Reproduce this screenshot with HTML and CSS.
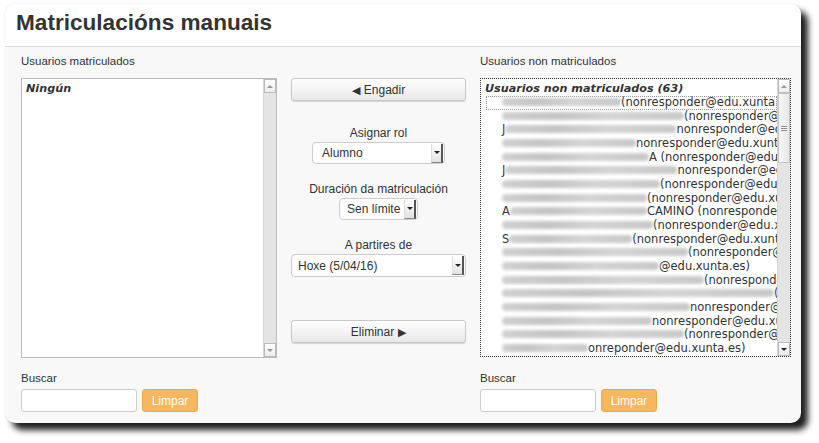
FILE: index.html
```html
<!DOCTYPE html>
<html lang="gl">
<head>
    <meta charset="UTF-8">
    <title>Matriculacións manuais</title>
    <link rel="stylesheet" href="styles.css">
</head>
<body>
    <div class="window">
        <h1 class="title">Matriculacións manuais</h1>

        <div class="panel">
            <div class="caption cap-left">Usuarios matriculados</div>
            <div class="caption cap-right">Usuarios non matriculados</div>

            <!-- enrolled users -->
            <div class="listbox box-left">
                <div class="list-body">
                    <div class="optgroup">Ningún</div>
                </div>
                <div class="scrollbar">
                    <div class="sb-btn"><span class="tri-up disabled"></span></div>
                    <div class="sb-track"></div>
                    <div class="sb-btn"><span class="tri-down disabled"></span></div>
                </div>
            </div>

            <!-- actions -->
            <div class="actions">
                <button class="btn"><span class="arrow-l">&#9664;</span>Engadir</button>

                <div class="field field-role">
                    <div class="field-label">Asignar rol</div>
                    <div class="select select-role">
                        <span class="select-text">Alumno</span>
                        <span class="select-arrow"><span class="tri-down"></span></span>
                    </div>
                </div>

                <div class="field">
                    <div class="field-label">Duración da matriculación</div>
                    <div class="select select-duration">
                        <span class="select-text">Sen límite</span>
                        <span class="select-arrow"><span class="tri-down"></span></span>
                    </div>
                </div>

                <div class="field">
                    <div class="field-label">A partires de</div>
                    <div class="select select-start">
                        <span class="select-text">Hoxe (5/04/16)</span>
                        <span class="select-arrow"><span class="tri-down"></span></span>
                    </div>
                </div>

                <button class="btn btn-remove">Eliminar<span class="arrow-r">&#9654;</span></button>
            </div>

            <!-- potential users -->
            <div class="listbox box-right focused">
                <div class="list-body">
                    <div class="optgroup">Usuarios non matriculados (63)</div>
                    <div class="opt selected"><span class="blur" style="width:119px"></span>(nonresponder@edu.xunta.es)</div>
                    <div class="opt"><span class="blur" style="width:182px"></span>(nonresponder@edu.xunta.es)</div>
                    <div class="opt">J<span class="blur" style="width:171px"></span>nonresponder@edu.xunta.es)</div>
                    <div class="opt"><span class="blur" style="width:134px"></span>nonresponder@edu.xunta.es)</div>
                    <div class="opt"><span class="blur" style="width:147px"></span>A (nonresponder@edu.xunta.es)</div>
                    <div class="opt">J<span class="blur" style="width:172px"></span>nonresponder@edu.xunta.es)</div>
                    <div class="opt"><span class="blur" style="width:158px"></span>(nonresponder@edu.xunta.es)</div>
                    <div class="opt"><span class="blur" style="width:145px"></span>(nonresponder@edu.xunta.es)</div>
                    <div class="opt">A<span class="blur" style="width:137px"></span>CAMINO (nonresponder@edu.xunta.es)</div>
                    <div class="opt"><span class="blur" style="width:151px"></span>(nonresponder@edu.xunta.es)</div>
                    <div class="opt">S<span class="blur" style="width:123px"></span>(nonresponder@edu.xunta.es)</div>
                    <div class="opt"><span class="blur" style="width:186px"></span>(nonresponder@edu.xunta.es)</div>
                    <div class="opt"><span class="blur" style="width:157px"></span>@edu.xunta.es)</div>
                    <div class="opt"><span class="blur" style="width:202px"></span>(nonresponder@edu.xunta.es)</div>
                    <div class="opt"><span class="blur" style="width:272px"></span>(nonresponder@edu.xunta.es)</div>
                    <div class="opt"><span class="blur" style="width:188px"></span>nonresponder@edu.xunta.es)</div>
                    <div class="opt"><span class="blur" style="width:150px"></span>nonresponder@edu.xunta.es)</div>
                    <div class="opt"><span class="blur" style="width:182px"></span>(nonresponder@edu.xunta.es)</div>
                    <div class="opt"><span class="blur" style="width:86px"></span>onreponder@edu.xunta.es)</div>
                </div>
                <div class="scrollbar">
                    <div class="sb-btn"><span class="tri-up disabled"></span></div>
                    <div class="sb-track">
                        <div class="sb-thumb"><span class="grip"></span></div>
                    </div>
                    <div class="sb-btn"><span class="tri-down"></span></div>
                </div>
            </div>

            <div class="search search-left">
                <div class="caption">Buscar</div>
                <div class="search-row">
                    <input class="search-input" type="text">
                    <button class="btn-clear">Limpar</button>
                </div>
            </div>

            <div class="search search-right">
                <div class="caption">Buscar</div>
                <div class="search-row">
                    <input class="search-input" type="text">
                    <button class="btn-clear">Limpar</button>
                </div>
            </div>
        </div>
    </div>
</body>
</html>
```

FILE: styles.css
```css
body {
    margin: 0;
    padding-bottom: 20px;
    background: #fff;
    font-family: 'Liberation Sans', Arial, sans-serif;
    color: #333;
}
.window {
    margin: 4px 0 0 5px;
    width: 796px;
    height: 419px;
    border-radius: 10px;
    background: #f8f8f8;
    box-shadow: 7px 7px 6px rgba(0, 0, 0, 0.88), 0 0 2px rgba(0, 0, 0, 0.12);
    overflow: hidden;
}
.title {
    margin: 0;
    height: 42px;
    padding-left: 11px;
    background: #fff;
    border-bottom: 1px solid #ddd;
    font-size: 22.6px;
    font-weight: bold;
    line-height: 37px;
    color: #333;
}
.panel {
    display: grid;
    grid-template-columns: 256px 175px 311px;
    grid-template-rows: auto 280px auto;
    column-gap: 14px;
    padding: 6px 0 0 16px;
}
.caption {
    font-size: 11.5px;
    line-height: 16px;
    color: #333;
}
.cap-left { grid-column: 1; grid-row: 1; margin-bottom: 9px; }
.cap-right { grid-column: 3; grid-row: 1; margin-bottom: 9px; }
.box-left { grid-column: 1; grid-row: 2; }
.box-right { grid-column: 3; grid-row: 2; height: 279px; }
.actions { grid-column: 2; grid-row: 2; }
.search-left { grid-column: 1; grid-row: 3; }
.search-right { grid-column: 3; grid-row: 3; }

/* list boxes */
.listbox {
    display: flex;
    box-sizing: border-box;
    background: #fff;
    border: 1px solid #bbb;
}
.listbox.focused {
    border: 1px dotted #333;
}
.list-body {
    flex: 1;
    min-width: 0;
    overflow: hidden;
    padding-top: 3px;
    font-family: 'DejaVu Sans', sans-serif;
    font-size: 11.2px;
    color: #333;
}
.optgroup {
    padding-left: 4px;
    font-weight: bold;
    font-style: italic;
    line-height: 14px;
}
.opt {
    padding-left: 21px;
    font-size: 11.5px;
    line-height: 13.67px;
    white-space: nowrap;
    color: #333;
}
.opt.selected {
    margin-left: 5px;
    padding-left: 16px;
    outline: 1px dotted #999;
    outline-offset: -1px;
}
.blur {
    display: inline-block;
    height: 8px;
    vertical-align: 0;
    background: linear-gradient(90deg, #d0d0d0, #c4c4c4 30%, #d4d4d4 60%, #c8c8c8);
    border-radius: 4px;
    filter: blur(1.6px);
}

/* scrollbars */
.scrollbar {
    width: 12px;
    display: flex;
    flex-direction: column;
    background: #e4e4e4;
    border-left: 1px solid #d4d4d4;
}
.sb-btn {
    height: 12px;
    display: flex;
    align-items: center;
    justify-content: center;
    background: linear-gradient(#fff, #ececec);
    border: 1px solid #bbb;
}
.sb-track {
    flex: 1;
}
.sb-thumb {
    height: 68px;
    background: linear-gradient(90deg, #f6f6f6, #e8e8e8);
    border: 1px solid #c4c4c4;
    display: flex;
    align-items: center;
    justify-content: center;
}
.grip {
    width: 6px;
    height: 5px;
    border-top: 1px solid #888;
    border-bottom: 1px solid #888;
    background: linear-gradient(#fff 40%, #888 40%, #888 60%, #fff 60%);
    box-sizing: border-box;
}
.tri-up, .tri-down {
    width: 0;
    height: 0;
    border-left: 3px solid transparent;
    border-right: 3px solid transparent;
}
.tri-up { border-bottom: 3px solid #222; }
.tri-down { border-top: 3px solid #222; }
.tri-up.disabled { border-bottom-color: #999; }
.tri-down.disabled { border-top-color: #999; }

/* middle column */
.btn {
    display: block;
    width: 100%;
    height: 23px;
    padding: 0;
    font-family: inherit;
    font-size: 12px;
    color: #333;
    background: linear-gradient(#fff, #e8e8e8);
    border: 1px solid #c8c8c8;
    border-radius: 3px;
    box-shadow: 0 1px 1px rgba(0, 0, 0, 0.15);
}
.arrow-l {
    font-size: 11px;
    margin-right: 4px;
}
.arrow-r {
    font-size: 11px;
    margin-left: 4px;
}
.btn-remove {
    margin-top: 43px;
}
.field {
    display: flex;
    flex-direction: column;
    align-items: center;
    margin-top: 17px;
}
.field-role {
    margin-top: 24px;
}
.field-label {
    font-size: 12px;
    line-height: 16px;
    margin-bottom: 1px;
}
.select {
    display: flex;
    align-items: center;
    box-sizing: border-box;
    height: 22px;
    background: #fff;
    border: 1px solid #ccc;
    border-radius: 4px;
    font-size: 12px;
    color: #333;
}
.select-text {
    flex: 1;
    padding-left: 9px;
    white-space: nowrap;
}
.select-arrow {
    width: 9px;
    height: 18px;
    margin-right: 1px;
    display: flex;
    align-items: center;
    justify-content: center;
    background: linear-gradient(#fff, #e2e2e2);
    border-left: 1px solid #ddd;
    border-right: 2px solid #555;
    border-bottom: 1px solid #888;
}
.select-role { width: 133px; }
.select-duration { width: 79px; }
.select-duration .select-text { padding-left: 7px; }
.select-start { width: 100%; height: 23px; }
.select-start .select-text { padding-left: 6px; }

/* search */
.search {
    margin-top: 12px;
}
.search .caption {
    margin-bottom: 3px;
}
.search-row {
    display: flex;
    gap: 5px;
}
.search-input {
    box-sizing: border-box;
    width: 116px;
    height: 23px;
    margin: 0;
    background: #fff;
    border: 1px solid #ccc;
    border-radius: 3px;
}
.btn-clear {
    width: 56px;
    height: 23px;
    padding: 0;
    font-family: inherit;
    font-size: 12px;
    color: #fff;
    background: #f6b75e;
    border: 1px solid #efaa4c;
    border-radius: 3px;
}
```
